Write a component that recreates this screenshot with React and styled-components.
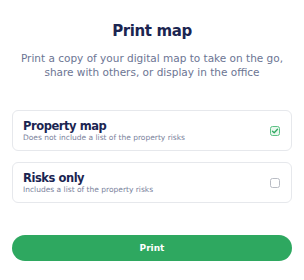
import React, { useState } from 'react'
import styled, { createGlobalStyle } from 'styled-components'

const GlobalStyle = createGlobalStyle`
  html, body {
    margin: 0;
    padding: 0;
    background: #ffffff;
  }
  body {
    font-family: "DejaVu Sans", "Open Sans", sans-serif;
  }
`;

const options = [
  { id: 'property', title: 'Property map', desc: 'Does not include a list of the property risks' },
  { id: 'risks', title: 'Risks only', desc: 'Includes a list of the property risks' },
];

const App = () => {
  const [selected, setSelected] = useState('property')
  return (
    <>
      <GlobalStyle />
      <Dialog>
        <Title>Print map</Title>
        <Subtitle>
          Print a copy of your digital map to take on the go,<br />
          share with others, or display in the office
        </Subtitle>
        <Options>
          {options.map(o => (
            <OptionCard key={o.id} onClick={() => setSelected(o.id)}>
              <OptionText>
                <OptionTitle>{o.title}</OptionTitle>
                <OptionDesc>{o.desc}</OptionDesc>
              </OptionText>
              <Checkbox checked={selected === o.id}>
                {selected === o.id && (
                  <svg width="8" height="8" viewBox="0 0 8 8">
                    <path d="M1.5 4.2 L3.2 5.8 L6.5 2.3" fill="none" stroke="#2ea860" strokeWidth="1.3" strokeLinecap="round" strokeLinejoin="round" />
                  </svg>
                )}
              </Checkbox>
            </OptionCard>
          ))}
        </Options>
        <PrintButton>Print</PrintButton>
      </Dialog>
    </>
  )
}

const Dialog = styled.div`
  width: 304px;
  height: 280px;
  box-sizing: border-box;
  padding: 21px 12px 0;
  display: flex;
  flex-direction: column;
  align-items: stretch;
`;

const Title = styled.h2`
  margin: 0;
  text-align: center;
  font-size: 15px;
  font-weight: 600;
  letter-spacing: -0.4px;
  line-height: 20px;
  color: #1b2551;
`;

const Subtitle = styled.p`
  margin: 10px 0 0;
  text-align: center;
  font-size: 10.5px;
  line-height: 14px;
  color: #6c7593;
`;

const Options = styled.div`
  margin-top: 31px;
  display: flex;
  flex-direction: column;
  gap: 11px;
`;

const OptionCard = styled.div`
  height: 41px;
  box-sizing: border-box;
  border: 1px solid #e6e8ec;
  border-radius: 6px;
  padding: 0 11px 0 10px;
  display: flex;
  align-items: center;
  justify-content: space-between;
  cursor: pointer;
`;

const OptionText = styled.div`
  display: flex;
  flex-direction: column;
`;

const OptionTitle = styled.div`
  font-size: 11.5px;
  font-weight: 700;
  letter-spacing: -0.45px;
  line-height: 14px;
  color: #1b2551;
`;

const OptionDesc = styled.div`
  font-size: 7.5px;
  line-height: 10px;
  color: #7a829c;
`;

const Checkbox = styled.div`
  width: 10px;
  height: 10px;
  box-sizing: border-box;
  border-radius: 2.5px;
  border: 1px solid ${props => props.checked ? '#5cc184' : '#b9bcc4'};
  background: ${props => props.checked ? '#e9f7ee' : '#ffffff'};
  display: flex;
  align-items: center;
  justify-content: center;
`;

const PrintButton = styled.button`
  margin-top: 32px;
  height: 26px;
  border: none;
  border-radius: 13px;
  background: #2ea860;
  color: #ffffff;
  font-family: inherit;
  font-size: 9px;
  font-weight: 600;
  padding: 0;
  cursor: pointer;
`;

export default App
